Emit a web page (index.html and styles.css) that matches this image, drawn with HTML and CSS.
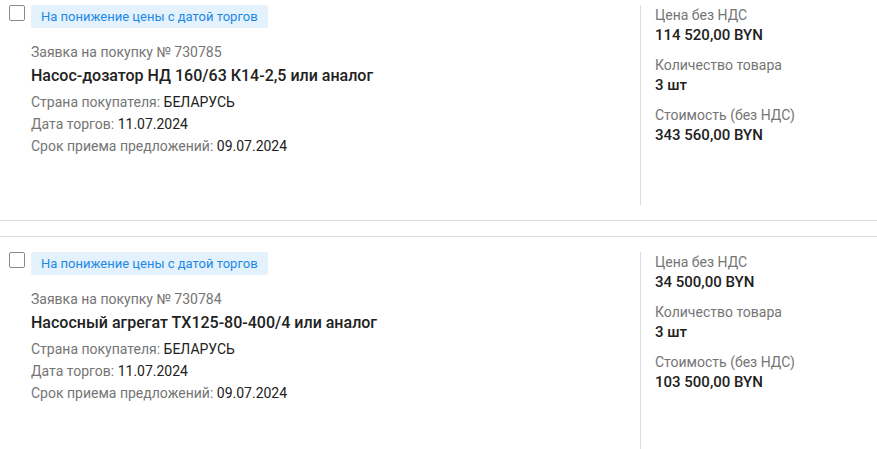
FILE: index.html
```html
<!DOCTYPE html>
<html lang="ru">
<head>
    <meta charset="UTF-8">
    <meta name="viewport" content="width=device-width, initial-scale=1.0">
    <title>Заявки на покупку</title>
    <link rel="stylesheet" href="styles.css">
</head>
<body>
    <div class="list">
        <div class="card">
            <div class="card-main">
                <span class="check"></span>
                <div class="info">
                    <span class="badge">На понижение цены с датой торгов</span>
                    <div class="number">Заявка на покупку № 730785</div>
                    <div class="title">Насос-дозатор НД 160/63 К14-2,5 или аналог</div>
                    <div class="row">Страна покупателя: <span class="val">БЕЛАРУСЬ</span></div>
                    <div class="row">Дата торгов: <span class="val">11.07.2024</span></div>
                    <div class="row">Срок приема предложений: <span class="val">09.07.2024</span></div>
                </div>
            </div>
            <div class="card-side">
                <div class="param">
                    <div class="label">Цена без НДС</div>
                    <div class="value">114 520,00 BYN</div>
                </div>
                <div class="param">
                    <div class="label">Количество товара</div>
                    <div class="value">3 шт</div>
                </div>
                <div class="param">
                    <div class="label">Стоимость (без НДС)</div>
                    <div class="value">343 560,00 BYN</div>
                </div>
            </div>
        </div>

        <div class="card">
            <div class="card-main">
                <span class="check"></span>
                <div class="info">
                    <span class="badge">На понижение цены с датой торгов</span>
                    <div class="number">Заявка на покупку № 730784</div>
                    <div class="title">Насосный агрегат ТХ125-80-400/4 или аналог</div>
                    <div class="row">Страна покупателя: <span class="val">БЕЛАРУСЬ</span></div>
                    <div class="row">Дата торгов: <span class="val">11.07.2024</span></div>
                    <div class="row">Срок приема предложений: <span class="val">09.07.2024</span></div>
                </div>
            </div>
            <div class="card-side">
                <div class="param">
                    <div class="label">Цена без НДС</div>
                    <div class="value">34 500,00 BYN</div>
                </div>
                <div class="param">
                    <div class="label">Количество товара</div>
                    <div class="value">3 шт</div>
                </div>
                <div class="param">
                    <div class="label">Стоимость (без НДС)</div>
                    <div class="value">103 500,00 BYN</div>
                </div>
            </div>
        </div>
    </div>
</body>
</html>
```

FILE: styles.css
```css
body {
    margin: 0;
    font-family: Roboto, "Liberation Sans", Arial, sans-serif;
    color: #212121;
    background: #fff;
}
.list {
    margin-top: -11px;
}
.card {
    display: flex;
    min-height: 200px;
    padding: 15px 0 15px 9px;
    border-top: 1px solid #dcdcdc;
    border-bottom: 1px solid #dcdcdc;
    margin-bottom: 15px;
}
.card-main {
    flex: 1;
    display: flex;
    align-items: flex-start;
}
.check {
    box-sizing: border-box;
    width: 16px;
    height: 16px;
    border: 1px solid #8a8a8a;
    border-radius: 2px;
    margin-right: 6px;
    flex-shrink: 0;
}
.info {
    display: flex;
    flex-direction: column;
    align-items: flex-start;
}
.badge {
    display: inline-block;
    height: 23px;
    line-height: 23px;
    padding: 0 10px;
    background: #e3f2fd;
    color: #1e88e5;
    font-size: 13px;
    border-radius: 3px;
    margin-bottom: 13px;
}
.number {
    font-size: 14px;
    line-height: 22px;
    color: #757575;
}
.title {
    font-size: 16px;
    font-weight: 500;
    line-height: 26px;
    margin-bottom: 2px;
}
.row {
    font-size: 14px;
    line-height: 22px;
    color: #757575;
}
.row .val {
    color: #212121;
}
.card-side {
    width: 222px;
    border-left: 1px solid #dcdcdc;
    padding-left: 14px;
}
.param {
    margin-bottom: 10px;
}
.label {
    font-size: 14px;
    line-height: 20px;
    color: #757575;
}
.value {
    font-size: 15px;
    font-weight: 500;
    line-height: 20px;
}
```
